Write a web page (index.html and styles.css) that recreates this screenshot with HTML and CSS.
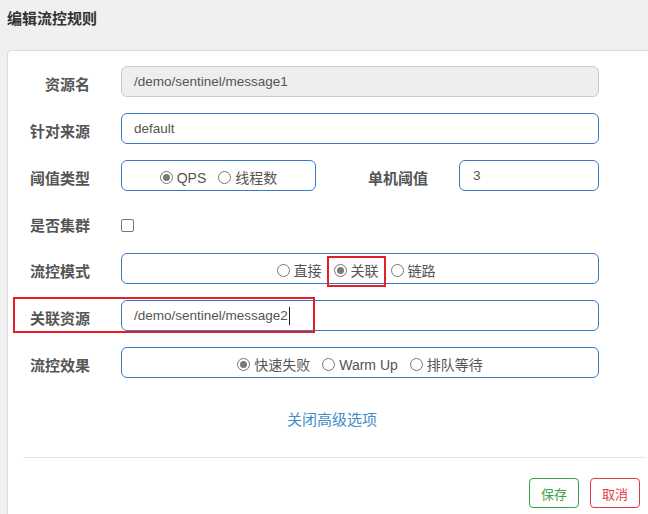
FILE: index.html
```html
<!DOCTYPE html>
<html>
<head>
<meta charset="utf-8">
<link rel="stylesheet" href="styles.css">
</head>
<body>
<div class="page">
  <div class="title">编辑流控规则</div>
  <div class="card">
    <div class="row">
      <div class="lbl">资源名</div>
      <div class="field disabled">/demo/sentinel/message1</div>
    </div>
    <div class="row">
      <div class="lbl">针对来源</div>
      <div class="field">default</div>
    </div>
    <div class="row">
      <div class="lbl">阈值类型</div>
      <div class="split">
        <div class="field group small">
          <span class="opt"><span class="radio on"></span>QPS</span>
          <span class="opt"><span class="radio"></span>线程数</span>
        </div>
        <div class="lbl inner">单机阈值</div>
        <div class="field narrow">3</div>
      </div>
    </div>
    <div class="row check-row">
      <div class="lbl">是否集群</div>
      <div><span class="checkbox"></span></div>
    </div>
    <div class="row">
      <div class="lbl">流控模式</div>
      <div class="field group shifted">
        <span class="opt"><span class="radio"></span>直接</span>
        <span class="opt marked"><span class="radio on"></span>关联<span class="mark mark-opt"></span></span>
        <span class="opt"><span class="radio"></span>链路</span>
      </div>
    </div>
    <div class="row marked">
      <div class="lbl">关联资源</div>
      <div class="field">/demo/sentinel/message2<span class="caret"></span></div>
      <span class="mark mark-row"></span>
    </div>
    <div class="row">
      <div class="lbl">流控效果</div>
      <div class="field group">
        <span class="opt"><span class="radio on"></span>快速失败</span>
        <span class="opt"><span class="radio"></span>Warm Up</span>
        <span class="opt"><span class="radio"></span>排队等待</span>
      </div>
    </div>
    <div class="more"><a class="link">关闭高级选项</a></div>
    <div class="divider"></div>
    <div class="actions">
      <button class="btn save">保存</button>
      <button class="btn cancel">取消</button>
    </div>
  </div>
</div>
</body>
</html>
```
FILE: styles.css
```css
html, body {
  margin: 0;
  padding: 0;
  overflow: hidden;
}
body {
  background: #f0f0f0;
  font-family: "Liberation Sans", "Noto Sans CJK SC", sans-serif;
  font-size: 14px;
  color: #555;
  width: 648px;
  height: 514px;
}
.page {
  padding-left: 7px;
}
.title {
  height: 50px;
  box-sizing: border-box;
  padding-top: 9px;
  line-height: 20px;
  font-size: 15px;
  font-weight: bold;
  color: #333;
}
.card {
  width: 650px;
  height: 464px;
  box-sizing: border-box;
  overflow: hidden;
  background: #fff;
  border: 1px solid #dcdcdc;
  border-bottom: none;
  border-radius: 4px 0 0 0;
  padding-top: 15px;
}
.row {
  display: grid;
  grid-template-columns: 82px 478px;
  column-gap: 31px;
  height: 31px;
  margin-bottom: 16px;
  position: relative;
}
.check-row {
  height: 30px;
}
.lbl {
  text-align: right;
  font-weight: bold;
  font-size: 15px;
  line-height: 21px;
  padding-top: 8px;
  color: #555;
  white-space: nowrap;
}
.field {
  height: 31px;
  box-sizing: border-box;
  border: 1px solid #3a7bbf;
  border-radius: 6px;
  padding-left: 12px;
  font-size: 13.5px;
  line-height: 29px;
  color: #555;
  background: #fff;
  position: relative;
}
.field.disabled {
  background: #eeeeee;
  border-color: #cccccc;
}
.split {
  display: flex;
}
.field.small {
  width: 195px;
}
.lbl.inner {
  width: 112px;
  margin-right: 31px;
  padding-top: 8px;
}
.field.narrow {
  width: 140px;
  padding-left: 13px;
}
.group {
  display: flex;
  justify-content: center;
  align-items: center;
  padding: 4px 0 0 0;
  font-size: 14px;
  line-height: 20px;
}
.group.shifted {
  padding-right: 8px;
}
.opt {
  display: inline-flex;
  align-items: center;
  height: 20px;
  margin: 0 6px;
  position: relative;
  white-space: nowrap;
}
.radio {
  width: 13px;
  height: 13px;
  box-sizing: border-box;
  border: 1px solid #767676;
  border-radius: 50%;
  margin-right: 4px;
  position: relative;
  background: #fff;
}
.radio.on::after {
  content: "";
  position: absolute;
  left: 2px;
  top: 2px;
  width: 7px;
  height: 7px;
  border-radius: 50%;
  background: #7a7a7a;
}
.checkbox {
  display: block;
  width: 13px;
  height: 13px;
  box-sizing: border-box;
  border: 1px solid #767676;
  border-radius: 2px;
  margin-top: 12px;
}
.caret {
  display: inline-block;
  width: 1px;
  height: 18px;
  background: #222;
  vertical-align: middle;
  margin-left: 1px;
}
.mark {
  position: absolute;
  border: 2px solid #e3202a;
  box-sizing: border-box;
  pointer-events: none;
}
.mark-opt {
  left: -7px;
  top: -5px;
  width: 59px;
  height: 31px;
}
.mark-row {
  left: 5px;
  top: -3px;
  width: 302px;
  height: 36px;
}
.more {
  margin-top: 32px;
  width: 650px;
  margin-left: -1px;
  text-align: center;
  line-height: 20px;
  font-size: 15px;
}
.link {
  color: #428bca;
  cursor: pointer;
}
.divider {
  margin: 27px 11px 0 15px;
  border-top: 1px solid #e5e5e5;
}
.actions {
  display: flex;
  justify-content: flex-end;
  gap: 11px;
  margin-top: 20px;
  padding-right: 16px;
}
.btn {
  width: 50px;
  height: 30px;
  box-sizing: border-box;
  background: #fff;
  border-radius: 4px;
  font-family: "Liberation Sans", "Noto Sans CJK SC", sans-serif;
  font-size: 13px;
  padding: 0;
}
.save {
  border: 1px solid #3aa24a;
  color: #3aa24a;
}
.cancel {
  border: 1px solid #e03a4a;
  color: #e03a4a;
}
```
